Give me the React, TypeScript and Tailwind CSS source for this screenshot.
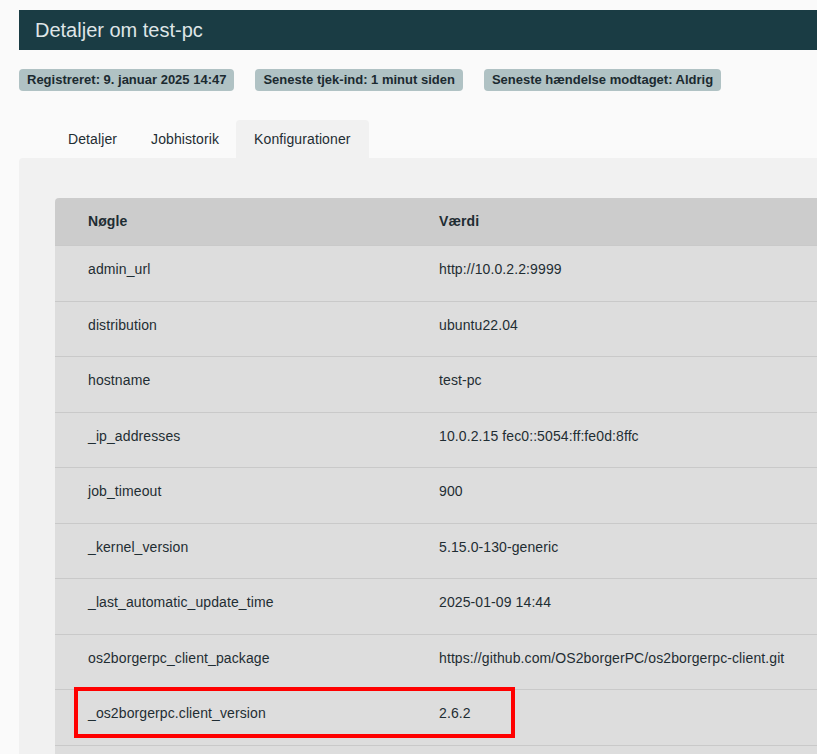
import React from 'react';

const rows: [string, string][] = [
  ['admin_url', 'http://10.0.2.2:9999'],
  ['distribution', 'ubuntu22.04'],
  ['hostname', 'test-pc'],
  ['_ip_addresses', '10.0.2.15 fec0::5054:ff:fe0d:8ffc'],
  ['job_timeout', '900'],
  ['_kernel_version', '5.15.0-130-generic'],
  ['_last_automatic_update_time', '2025-01-09 14:44'],
  ['os2borgerpc_client_package', 'https://github.com/OS2borgerPC/os2borgerpc-client.git'],
  ['_os2borgerpc.client_version', '2.6.2'],
];

const badges = [
  'Registreret: 9. januar 2025 14:47',
  'Seneste tjek-ind: 1 minut siden',
  'Seneste hændelse modtaget: Aldrig',
];

const tabs = ['Detaljer', 'Jobhistorik', 'Konfigurationer'];

export default function App() {
  return (
    <div className="w-[817px] h-[754px] overflow-hidden bg-[#fafafa] text-[#1f2d33] font-['Liberation_Sans',Arial,sans-serif]">
      <div className="ml-[19px] pt-[10px] w-[900px]">
        <div className="h-[40px] bg-[#1a3c44] flex items-center pl-4">
          <h1 className="text-[20px] text-[#dfe5e7] leading-none">Detaljer om test-pc</h1>
        </div>

        <div className="flex gap-[21px] mt-[19px]">
          {badges.map((b) => (
            <span
              key={b}
              className="h-[22px] px-[8px] flex items-center rounded-[4px] bg-[#b0c2c4] text-[13px] font-bold text-[#1b2a30]"
            >
              {b}
            </span>
          ))}
        </div>

        <div className="flex pl-[32px] mt-[29px]">
          {tabs.map((t, i) => (
            <div
              key={t}
              className={`h-[38px] px-[17px] flex items-center text-[14px] tracking-[0.1px] rounded-t-[4px] ${
                i === 2 ? 'bg-[#f1f1f1] px-[18px]' : ''
              }`}
            >
              {t}
            </div>
          ))}
        </div>

        <div className="bg-[#f1f1f1] rounded-tl-[4px] pl-[36px] pt-[40px] h-[700px]">
          <div className="relative rounded-tl-[4px] overflow-hidden text-[14px] tracking-[0.1px]">
            <div className="flex h-[47px] items-center bg-[#cccccc] font-bold">
              <div className="w-[351px] pl-[33px]">Nøgle</div>
              <div className="pl-[33px]">Værdi</div>
            </div>
            {rows.map(([k, v]) => (
              <div key={k} className="flex h-[55.5px] items-center pb-[7px] bg-[#dddddd] border-t border-[#c9c9c9] first-of-type:border-t-0">
                <div className="w-[351px] pl-[33px]">{k}</div>
                <div className="pl-[33px]">{v}</div>
              </div>
            ))}
            <div className="h-[55.5px] bg-[#dddddd] border-t border-[#c9c9c9]" />
            <div className="absolute left-[19px] top-[489px] w-[441px] h-[51px] border-4 border-[#ff0000]" />
          </div>
        </div>
      </div>
    </div>
  );
}
